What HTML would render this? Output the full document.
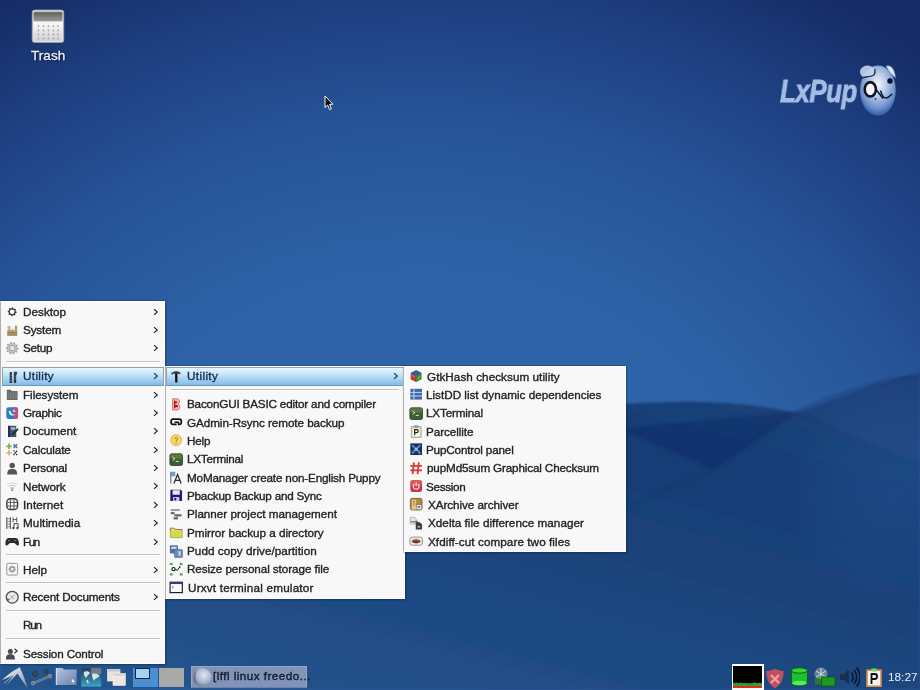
<!DOCTYPE html>
<html><head><meta charset="utf-8"><style>
html,body{margin:0;padding:0;width:920px;height:690px;overflow:hidden}
body{position:relative;font-family:"Liberation Sans",sans-serif;
background:linear-gradient(180deg,#162b63 0px,#1c3a7a 20px,#21458a 45px,#244b8e 100px,#28549a 200px,#2d5fa3 290px,#2c5ea2 335px,#27569a 370px,#22508e 430px,#1f4883 520px,#1e4680 600px,#21508b 660px,#21508c 690px)}
.t{position:absolute;white-space:nowrap;line-height:normal;-webkit-text-stroke:0.35px currentColor;will-change:transform}
.menu{position:absolute;background:#f8f8f8;box-sizing:border-box;border:1px solid #b0b0b0;border-top-color:#ffffff;border-right-color:#ffffff;border-bottom-color:#ffffff;box-shadow:0 -1px 0 rgba(10,30,80,.25),1px 1px 1.5px rgba(10,25,60,.45)}
.sep{position:absolute;height:1px;background:#c2c2c2;box-shadow:0 1px 0 #ffffff}
.hl{position:absolute;box-sizing:border-box;border:1px solid #8fa2ad;border-bottom-color:#6d9ab8;
background:linear-gradient(180deg,#e6f7fd 0%,#cfe9f8 30%,#a8d2f1 65%,#80bde9 100%)}
.ar{position:absolute}
.ic{position:absolute}
</style></head><body>
<svg style="position:absolute;left:0;top:0" width="920" height="690" viewBox="0 0 920 690">
<defs>
<radialGradient id="rg" gradientUnits="userSpaceOnUse" cx="423.2" cy="577.9" r="787.6" gradientTransform="translate(423.2 577.9) scale(1 0.86298) translate(-423.2 -577.9)">
<stop offset="0.0000" stop-color="#2f63a7"/><stop offset="0.4167" stop-color="#2f63a7"/><stop offset="0.5000" stop-color="#2c5fa3"/><stop offset="0.6667" stop-color="#275499"/><stop offset="0.8333" stop-color="#1f4183"/><stop offset="1.0000" stop-color="#152c66"/>
</radialGradient>
<linearGradient id="lg" gradientUnits="userSpaceOnUse" x1="735.0" y1="400.0" x2="629.4" y2="806.5"><stop offset="0.000" stop-color="#1a4078"/><stop offset="0.214" stop-color="#183d75"/><stop offset="1.000" stop-color="#24548d"/></linearGradient>
<linearGradient id="hg" gradientUnits="userSpaceOnUse" x1="700" y1="0" x2="920" y2="0">
<stop offset="0" stop-color="#0a1840" stop-opacity="0"/><stop offset="1" stop-color="#0a1840" stop-opacity="0.22"/>
</linearGradient>
<filter id="bl" x="-10%" y="-10%" width="120%" height="120%"><feGaussianBlur stdDeviation="0.8"/></filter>
<radialGradient id="lr" gradientUnits="userSpaceOnUse" cx="895" cy="495" r="110"><stop offset="0" stop-color="#3a72bc" stop-opacity="0.2"/><stop offset="0.6" stop-color="#3a72bc" stop-opacity="0.12"/><stop offset="1" stop-color="#3a72bc" stop-opacity="0"/></radialGradient>
</defs>
<rect width="920" height="690" fill="url(#rg)"/>
<path d="M0 520 C150 470 330 430 520 412 C600 405 660 401 701 402 C740 403 770 407 796 413 C840 397 880 380 920 374 L920 690 L0 690 Z" fill="url(#lg)" filter="url(#bl)"/>
<g filter="url(#bl)">
<path d="M620 429 C680 423 740 418 797 412 C770 430 740 452 714 469.6 C685 456 650 442 620 429 Z" fill="#0a1a48" opacity="0.16"/>
<path d="M797 412 C840 392 880 380 920 376 L920 466 C880 448 840 430 797 412 Z" fill="#3a78c0" opacity="0.07"/>
</g>
<g fill="none" filter="url(#bl)" stroke-linecap="round">
<path d="M560 542 C600 518 640 498 714 469.6 C740 452 770 430 797 412 C840 392 880 380 920 376" stroke="#15336a" stroke-width="3" opacity="0.35"/>
<path d="M620 429 C680 423 740 418 797 412" stroke="#163a70" stroke-width="1.5" opacity="0.35"/>
<path d="M600 420 C640 438 680 455 714 469.6" stroke="#15336a" stroke-width="2" opacity="0.35"/>
<path d="M797 412 C840 430 870 448 920 466" stroke="#17386e" stroke-width="2" opacity="0.35"/>
</g>

<rect x="780" y="380" width="140" height="230" fill="url(#lr)"/>
</svg>
<!-- trash -->
<svg style="position:absolute;left:31px;top:9px" width="34" height="35" viewBox="0 0 34 35">
<defs>
<linearGradient id="tlid" x1="0" y1="0" x2="0" y2="1"><stop offset="0" stop-color="#c8c8c8"/><stop offset="0.15" stop-color="#646464"/><stop offset="1" stop-color="#9a9a9a"/></linearGradient>
<linearGradient id="tbody" x1="0" y1="0" x2="0" y2="1"><stop offset="0" stop-color="#fafafa"/><stop offset="1" stop-color="#d2d2d2"/></linearGradient>
</defs>
<rect x="1.2" y="1" width="31.6" height="32.5" rx="2.5" fill="#e9e9e9" stroke="#9a9a9a" stroke-width="0.8"/>
<rect x="2.5" y="2.2" width="29" height="10" rx="1.5" fill="url(#tlid)"/>
<rect x="2.5" y="13.2" width="29" height="19" rx="1" fill="url(#tbody)"/>
<g fill="#a8a8a8">
<circle cx="7.5" cy="17" r="0.9"/><circle cx="12.5" cy="17" r="0.9"/><circle cx="17.5" cy="17" r="0.9"/><circle cx="22.5" cy="17" r="0.9"/><circle cx="27" cy="17" r="0.9"/>
<circle cx="7.5" cy="21.5" r="0.9"/><circle cx="12.5" cy="21.5" r="0.9"/><circle cx="17.5" cy="21.5" r="0.9"/><circle cx="22.5" cy="21.5" r="0.9"/><circle cx="27" cy="21.5" r="0.9"/>
<circle cx="7.5" cy="25.5" r="0.9"/><circle cx="12.5" cy="25.5" r="1"/><circle cx="17.5" cy="25.5" r="1"/><circle cx="22.5" cy="25.5" r="1"/><circle cx="27" cy="25.5" r="0.9"/>
<circle cx="7.5" cy="29.5" r="0.9"/><circle cx="12.5" cy="29.5" r="1"/><circle cx="17.5" cy="29.5" r="1"/><circle cx="22.5" cy="29.5" r="1"/><circle cx="27" cy="29.5" r="0.9"/>
</g>
</svg>
<div class="t" style="left:31px;top:48px;font-size:13.6px;color:#eef2fa;text-shadow:0 0 2px rgba(0,0,30,.8),1px 1px 1px rgba(0,0,30,.7);-webkit-text-stroke:0.3px #eef2fa">Trash</div>
<!-- logo -->
<div class="t" id="lxpup" style="left:780px;top:73px;font-size:31.5px;font-weight:bold;font-style:italic;color:#a3bce6;transform-origin:0 0;transform:scaleX(0.82);-webkit-text-stroke:0.9px #a3bce6;letter-spacing:-0.5px">LxPup</div>
<svg style="position:absolute;left:857px;top:63px" width="42" height="56" viewBox="0 0 42 56">
<defs>
<radialGradient id="dog" cx="0.5" cy="0.38" r="0.62"><stop offset="0" stop-color="#f2f6fc"/><stop offset="0.35" stop-color="#bccdea"/><stop offset="0.75" stop-color="#6f91cc"/><stop offset="1" stop-color="#2f56a0"/></radialGradient>
</defs>
<ellipse cx="20.9" cy="27.6" rx="18.3" ry="25.6" fill="url(#dog)" stroke="#1a3574" stroke-width="0.9"/>
<ellipse cx="10.5" cy="9" rx="7.5" ry="6.5" fill="#c4d4ee" opacity="0.9"/>
<path d="M29 3 C34 1.5 38 6 38.5 15 C35 12 31 8 29 3Z" fill="#dbe6f6" stroke="#5a78b0" stroke-width="0.6"/>
<path d="M4 15 C8 13.5 13 14.5 17 12 C18 10.5 18.2 8 18 6" fill="none" stroke="#1c2a50" stroke-width="1.3"/>
<ellipse cx="13.3" cy="26.3" rx="5.6" ry="7.2" fill="#f4f6fb" stroke="#0e1220" stroke-width="2.6"/>
<circle cx="33" cy="18" r="2.7" fill="#0e1220"/>
<path d="M19 26.5 L26 35.5" stroke="#12182c" stroke-width="1.5"/>
<path d="M23.5 27.5 C25.5 35 28.5 38 35 31" fill="none" stroke="#12182c" stroke-width="1.5"/>
<circle cx="18.5" cy="36" r="0.9" fill="#2a3a60"/>
</svg>
<!-- cursor -->
<svg style="position:absolute;left:324px;top:95px" width="10" height="16" viewBox="0 0 10 16">
<path d="M1 1 L1 12.5 L3.6 10 L5.6 14.6 L7.4 13.8 L5.5 9.4 L8.8 9.2 Z" fill="#000" stroke="#fff" stroke-width="1" stroke-linejoin="round"/>
</svg>
<div class="menu" style="left:0px;top:301px;width:165px;height:363px"></div>
<div class="hl" style="left:1.5px;width:162.0px;top:367.2px;height:18.400000000000034px"></div>
<div class="sep" style="left:6px;width:153.5px;top:360.80px"></div>
<div class="sep" style="left:6px;width:153.5px;top:554.30px"></div>
<div class="sep" style="left:6px;width:153.5px;top:582.20px"></div>
<div class="sep" style="left:6px;width:153.5px;top:609.80px"></div>
<div class="sep" style="left:6px;width:153.5px;top:637.90px"></div>
<div class="t" style="left:23.10px;top:305.01px;font-size:11.7px;letter-spacing:0.037px;color:#222222;">Desktop</div>
<svg class="ar" style="left:153.20px;top:307.90px" width="6" height="8" viewBox="0 0 6 8"><path d="M1 1.1 L4.3 4 L1 6.9" fill="none" stroke="#222222" stroke-width="1.15"/></svg>
<svg class="ic" style="left:5.40px;top:304.50px" width="14.4" height="14.4" viewBox="0 0 16 16"><polygon points="13.00,7.60 12.90,8.58 11.60,9.09 11.24,9.77 11.54,11.14 10.78,11.76 9.49,11.20 8.76,11.43 8.00,12.60 7.02,12.50 6.51,11.20 5.83,10.84 4.46,11.14 3.84,10.38 4.40,9.09 4.17,8.36 3.00,7.60 3.10,6.62 4.40,6.11 4.76,5.43 4.46,4.06 5.22,3.44 6.51,4.00 7.24,3.77 8.00,2.60 8.98,2.70 9.49,4.00 10.17,4.36 11.54,4.06 12.16,4.82 11.60,6.11 11.83,6.84" fill="#333333"/><circle cx="8" cy="7.6" r="2.7" fill="#f8f8f8"/></svg>
<div class="t" style="left:22.96px;top:323.21px;font-size:11.7px;letter-spacing:-0.138px;color:#222222;">System</div>
<svg class="ar" style="left:153.20px;top:326.10px" width="6" height="8" viewBox="0 0 6 8"><path d="M1 1.1 L4.3 4 L1 6.9" fill="none" stroke="#222222" stroke-width="1.15"/></svg>
<svg class="ic" style="left:5.40px;top:322.70px" width="14.4" height="14.4" viewBox="0 0 16 16"><path d="M2.5 14.5 L2.5 8 L6 6 L6 8.5 L9.5 6 L9.5 8.5 L11 8 L11 3 L13.5 3 L13.5 14.5Z" fill="#b39b6e"/><path d="M2.5 10.5 H13.5 M2.5 12.5 H13.5" stroke="#8a7550" stroke-width="0.7"/><circle cx="4.5" cy="5" r="2" fill="#a8a8a8" opacity="0.8"/></svg>
<div class="t" style="left:22.96px;top:341.31px;font-size:11.7px;letter-spacing:-0.240px;color:#222222;">Setup</div>
<svg class="ar" style="left:153.20px;top:344.20px" width="6" height="8" viewBox="0 0 6 8"><path d="M1 1.1 L4.3 4 L1 6.9" fill="none" stroke="#222222" stroke-width="1.15"/></svg>
<svg class="ic" style="left:5.40px;top:340.80px" width="14.4" height="14.4" viewBox="0 0 16 16"><polygon points="15.20,8.00 15.11,9.13 13.33,9.73 12.99,10.54 13.82,12.23 13.09,13.09 11.29,12.53 10.54,12.99 10.22,14.85 9.13,15.11 8.00,13.60 7.12,13.53 5.78,14.85 4.73,14.42 4.71,12.53 4.04,11.96 2.18,12.23 1.58,11.27 2.67,9.73 2.47,8.88 0.80,8.00 0.89,6.87 2.67,6.27 3.01,5.46 2.18,3.77 2.91,2.91 4.71,3.47 5.46,3.01 5.78,1.15 6.87,0.89 8.00,2.40 8.88,2.47 10.22,1.15 11.27,1.58 11.29,3.47 11.96,4.04 13.82,3.77 14.42,4.73 13.33,6.27 13.53,7.12" fill="#a9a9a9"/><circle cx="8" cy="8" r="2.4" fill="#e8e8e8"/><circle cx="8" cy="8" r="4.3" fill="none" stroke="#c8c8c8" stroke-width="1.2"/></svg>
<div class="t" style="left:23.02px;top:369.41px;font-size:11.7px;letter-spacing:0.353px;color:#122c55;">Utility</div>
<svg class="ar" style="left:153.20px;top:372.30px" width="6" height="8" viewBox="0 0 6 8"><path d="M1 1.1 L4.3 4 L1 6.9" fill="none" stroke="#122c55" stroke-width="1.15"/></svg>
<svg class="ic" style="left:5.40px;top:368.90px" width="14.4" height="14.4" viewBox="0 0 16 16"><rect x="5.2" y="3.5" width="2.6" height="12" fill="#2c3440"/><rect x="9.8" y="4.5" width="2.6" height="11" fill="#2c3440"/><path d="M9.8 3 L13.5 3 L13.5 6.5 L12.4 6.5 L12.4 4.5 L9.8 4.5Z" fill="#3a4250"/><path d="M5.2 7 H7.8 M5.2 10 H7.8 M5.2 13 H7.8 M9.8 8 H12.4 M9.8 11 H12.4" stroke="#8aa0b8" stroke-width="0.6"/></svg>
<div class="t" style="left:23.10px;top:387.76px;font-size:11.7px;letter-spacing:-0.053px;color:#222222;">Filesystem</div>
<svg class="ar" style="left:153.20px;top:390.65px" width="6" height="8" viewBox="0 0 6 8"><path d="M1 1.1 L4.3 4 L1 6.9" fill="none" stroke="#222222" stroke-width="1.15"/></svg>
<svg class="ic" style="left:5.40px;top:387.25px" width="14.4" height="14.4" viewBox="0 0 16 16"><path d="M2 3 L6.5 3 L7.5 4.5 L14 4.5 L14 14.5 L2 14.5Z" fill="#6b6b6b"/><rect x="3" y="6" width="10" height="7.5" fill="#7d7d7d"/><path d="M5 6 V13.5 M8 6 V13.5 M11 6 V13.5" stroke="#5a5a5a" stroke-width="0.5"/></svg>
<div class="t" style="left:23.19px;top:406.11px;font-size:11.7px;letter-spacing:-0.346px;color:#222222;">Graphic</div>
<svg class="ar" style="left:153.20px;top:409.00px" width="6" height="8" viewBox="0 0 6 8"><path d="M1 1.1 L4.3 4 L1 6.9" fill="none" stroke="#222222" stroke-width="1.15"/></svg>
<svg class="ic" style="left:5.40px;top:405.60px" width="14.4" height="14.4" viewBox="0 0 16 16"><rect x="1.5" y="1.5" width="13" height="13" rx="2.5" fill="#2a7fb8"/><path d="M9.5 1.5 H12 A2.5 2.5 0 0 1 14.5 4 V12 A2.5 2.5 0 0 1 12 14.5 H10Z" fill="#c04a8a"/><path d="M4 6 C5 11 9 12 11.5 9 C9 10 6.5 9 6 5Z" fill="#e8f4ff"/><path d="M9 3 L12 6 L9 7Z" fill="#f0d0e8"/></svg>
<div class="t" style="left:23.10px;top:424.46px;font-size:11.7px;letter-spacing:-0.003px;color:#222222;">Document</div>
<svg class="ar" style="left:153.20px;top:427.35px" width="6" height="8" viewBox="0 0 6 8"><path d="M1 1.1 L4.3 4 L1 6.9" fill="none" stroke="#222222" stroke-width="1.15"/></svg>
<svg class="ic" style="left:5.40px;top:423.95px" width="14.4" height="14.4" viewBox="0 0 16 16"><rect x="3.5" y="2" width="9" height="12.5" fill="#3d5070"/><rect x="3.5" y="2" width="2" height="12.5" fill="#1e2a40"/><rect x="6.5" y="3.5" width="5" height="3" fill="#9fb0c8"/><path d="M8 12 L14.5 5.5" stroke="#2a2a2a" stroke-width="2"/></svg>
<div class="t" style="left:23.19px;top:442.81px;font-size:11.7px;letter-spacing:-0.120px;color:#222222;">Calculate</div>
<svg class="ar" style="left:153.20px;top:445.70px" width="6" height="8" viewBox="0 0 6 8"><path d="M1 1.1 L4.3 4 L1 6.9" fill="none" stroke="#222222" stroke-width="1.15"/></svg>
<svg class="ic" style="left:5.40px;top:442.30px" width="14.4" height="14.4" viewBox="0 0 16 16"><path d="M4.5 1.8 V7.8 M1.5 4.8 H7.5" stroke="#7fb050" stroke-width="2"/><path d="M9.5 2.5 L13.5 6.5 M13.5 2.5 L9.5 6.5" stroke="#4a78b0" stroke-width="1.8"/><path d="M4.5 9 V15 M1.5 12 H7.5" stroke="#d8b070" stroke-width="1.8"/><path d="M9.5 14.5 L13.5 9.5" stroke="#3a3a3a" stroke-width="1.3"/><circle cx="10" cy="10" r="0.9" fill="#3a3a3a"/><circle cx="13" cy="14" r="0.9" fill="#3a3a3a"/></svg>
<div class="t" style="left:23.10px;top:461.21px;font-size:11.7px;letter-spacing:-0.282px;color:#222222;">Personal</div>
<svg class="ar" style="left:153.20px;top:464.10px" width="6" height="8" viewBox="0 0 6 8"><path d="M1 1.1 L4.3 4 L1 6.9" fill="none" stroke="#222222" stroke-width="1.15"/></svg>
<svg class="ic" style="left:5.40px;top:460.70px" width="14.4" height="14.4" viewBox="0 0 16 16"><circle cx="8" cy="5" r="3" fill="#555"/><path d="M2.5 15 C2.5 10 4.5 8.8 8 8.8 C11.5 8.8 13.5 10 13.5 15Z" fill="#555"/></svg>
<div class="t" style="left:23.10px;top:479.56px;font-size:11.7px;letter-spacing:-0.050px;color:#222222;">Network</div>
<svg class="ar" style="left:153.20px;top:482.45px" width="6" height="8" viewBox="0 0 6 8"><path d="M1 1.1 L4.3 4 L1 6.9" fill="none" stroke="#222222" stroke-width="1.15"/></svg>
<svg class="ic" style="left:5.40px;top:479.05px" width="14.4" height="14.4" viewBox="0 0 16 16"><path d="M2.5 6.5 C5.5 3.5 10.5 3.5 13.5 6.5" fill="none" stroke="#d8dde6" stroke-width="1.3"/><path d="M4.5 8.5 C6.5 6.5 9.5 6.5 11.5 8.5" fill="none" stroke="#b8c4d4" stroke-width="1.3"/><path d="M6.5 10.5 C7.3 9.8 8.7 9.8 9.5 10.5" fill="none" stroke="#8a9ab0" stroke-width="1.3"/><circle cx="8" cy="12.3" r="1" fill="#5a6a80"/></svg>
<div class="t" style="left:23.16px;top:497.91px;font-size:11.7px;letter-spacing:0.073px;color:#222222;">Internet</div>
<svg class="ar" style="left:153.20px;top:500.80px" width="6" height="8" viewBox="0 0 6 8"><path d="M1 1.1 L4.3 4 L1 6.9" fill="none" stroke="#222222" stroke-width="1.15"/></svg>
<svg class="ic" style="left:5.40px;top:497.40px" width="14.4" height="14.4" viewBox="0 0 16 16"><rect x="2" y="2" width="12" height="12" rx="4" fill="none" stroke="#3e3e3e" stroke-width="1.6"/><path d="M6 2.5 V13.5 M10 2.5 V13.5 M2.5 6 H13.5 M2.5 10 H13.5" stroke="#4a4a4a" stroke-width="1"/></svg>
<div class="t" style="left:23.09px;top:516.26px;font-size:11.7px;letter-spacing:0.078px;color:#222222;">Multimedia</div>
<svg class="ar" style="left:153.20px;top:519.15px" width="6" height="8" viewBox="0 0 6 8"><path d="M1 1.1 L4.3 4 L1 6.9" fill="none" stroke="#222222" stroke-width="1.15"/></svg>
<svg class="ic" style="left:5.40px;top:515.75px" width="14.4" height="14.4" viewBox="0 0 16 16"><path d="M2 1.5 V14.5 M6 1.5 V14.5" stroke="#555" stroke-width="1.2"/><path d="M2 3 H6 M2 6 H6 M2 9 H6 M2 12 H6" stroke="#666" stroke-width="0.8"/><path d="M9 1.5 V7 M13 1.5 V7 M9 4 H13" stroke="#555" stroke-width="1.1"/><path d="M10 13 V8.5 H14.5 V13" fill="none" stroke="#444" stroke-width="1.1"/><circle cx="9.3" cy="13.3" r="1.3" fill="#444"/><circle cx="13.8" cy="13.3" r="1.3" fill="#444"/></svg>
<div class="t" style="left:23.10px;top:534.61px;font-size:11.7px;letter-spacing:-1.501px;color:#222222;">Fun</div>
<svg class="ar" style="left:153.20px;top:537.50px" width="6" height="8" viewBox="0 0 6 8"><path d="M1 1.1 L4.3 4 L1 6.9" fill="none" stroke="#222222" stroke-width="1.15"/></svg>
<svg class="ic" style="left:5.40px;top:534.10px" width="14.4" height="14.4" viewBox="0 0 16 16"><path d="M4 4.5 H12 C14.5 4.5 15.5 8 15.5 11 C15.5 13 13.5 13.5 12 11.5 L10.5 10 H5.5 L4 11.5 C2.5 13.5 0.5 13 0.5 11 C0.5 8 1.5 4.5 4 4.5Z" fill="#2a2a2a"/><circle cx="4.5" cy="7.3" r="1" fill="#777"/><circle cx="11.5" cy="7.3" r="1" fill="#777"/></svg>
<div class="t" style="left:23.10px;top:562.71px;font-size:11.7px;letter-spacing:-0.003px;color:#222222;">Help</div>
<svg class="ar" style="left:153.20px;top:565.60px" width="6" height="8" viewBox="0 0 6 8"><path d="M1 1.1 L4.3 4 L1 6.9" fill="none" stroke="#222222" stroke-width="1.15"/></svg>
<svg class="ic" style="left:5.40px;top:562.20px" width="14.4" height="14.4" viewBox="0 0 16 16"><rect x="2" y="1.5" width="12" height="13" rx="1.5" fill="none" stroke="#8a8a8a" stroke-width="1"/><polygon points="12.20,8.00 12.12,8.82 10.96,9.22 10.66,9.78 10.97,10.97 10.33,11.49 9.22,10.96 8.62,11.14 8.00,12.20 7.18,12.12 6.78,10.96 6.22,10.66 5.03,10.97 4.51,10.33 5.04,9.22 4.86,8.62 3.80,8.00 3.88,7.18 5.04,6.78 5.34,6.22 5.03,5.03 5.67,4.51 6.78,5.04 7.38,4.86 8.00,3.80 8.82,3.88 9.22,5.04 9.78,5.34 10.97,5.03 11.49,5.67 10.96,6.78 11.14,7.38" fill="#9a9a9a"/><circle cx="8" cy="8" r="1.5" fill="#f4f4f4"/></svg>
<div class="t" style="left:23.10px;top:590.21px;font-size:11.7px;letter-spacing:-0.164px;color:#222222;">Recent Documents</div>
<svg class="ar" style="left:153.20px;top:593.10px" width="6" height="8" viewBox="0 0 6 8"><path d="M1 1.1 L4.3 4 L1 6.9" fill="none" stroke="#222222" stroke-width="1.15"/></svg>
<svg class="ic" style="left:5.40px;top:589.70px" width="14.4" height="14.4" viewBox="0 0 16 16"><circle cx="8" cy="8" r="6.6" fill="#eaeaea" stroke="#4e4e4e" stroke-width="1.4"/><path d="M5 11 L11 5 M6 6 L10 10" stroke="#8a8a8a" stroke-width="0.8"/><path d="M1.5 9 L3.5 13 L5 10Z" fill="#666"/></svg>
<div class="t" style="left:23.10px;top:618.41px;font-size:11.7px;letter-spacing:-1.270px;color:#222222;">Run</div>
<div class="t" style="left:22.96px;top:646.71px;font-size:11.7px;letter-spacing:-0.147px;color:#222222;">Session Control</div>
<svg class="ic" style="left:5.40px;top:646.20px" width="14.4" height="14.4" viewBox="0 0 16 16"><circle cx="6" cy="6" r="2.8" fill="#4a4a4a"/><path d="M1 15 C1 10.5 2.8 9.3 6 9.3 C9.2 9.3 11 10.5 11 15Z" fill="#4a4a4a"/><path d="M10.5 3 L13.5 5.5 L10.5 8" fill="none" stroke="#3a3a3a" stroke-width="1.4"/></svg>
<div class="menu" style="left:165px;top:366px;width:240px;height:233px"></div>
<div class="hl" style="left:166px;width:237.5px;top:367.2px;height:18.400000000000034px"></div>
<div class="t" style="left:187.02px;top:369.41px;font-size:11.7px;letter-spacing:0.379px;color:#122c55;">Utility</div>
<svg class="ar" style="left:393.00px;top:372.30px" width="6" height="8" viewBox="0 0 6 8"><path d="M1 1.1 L4.3 4 L1 6.9" fill="none" stroke="#122c55" stroke-width="1.15"/></svg>
<svg class="ic" style="left:169.30px;top:368.90px" width="14.4" height="14.4" viewBox="0 0 16 16"><path d="M3 4.5 C5 2 11 2 13 4.5 L12 6 C10 4.5 6 4.5 4 6Z" fill="#3a4048"/><circle cx="3.5" cy="5" r="1.3" fill="#6a7280"/><rect x="6.8" y="4.5" width="2.6" height="10.5" fill="#101010"/></svg>
<div class="sep" style="left:171px;width:227.5px;top:388.80px"></div>
<div class="t" style="left:187.10px;top:397.21px;font-size:11.7px;letter-spacing:-0.177px;color:#222222;">BaconGUI BASIC editor and compiler</div>
<svg class="ic" style="left:169.30px;top:396.70px" width="14.4" height="14.4" viewBox="0 0 16 16"><path d="M4 2 H9 C12.5 2 12.5 7 10 7.8 C13 8.5 13 14.5 9 14.5 H4Z" fill="#f0b8b8" stroke="#d46a6a" stroke-width="1"/><path d="M6.5 5 H8.5 C9.5 5 9.5 7 8.5 7 H6.5Z M6.5 9 H9 C10.3 9 10.3 11.5 9 11.5 H6.5Z" fill="#b01818"/><rect x="5.5" y="4" width="1.5" height="8.5" fill="#b01818"/></svg>
<div class="t" style="left:187.19px;top:415.57px;font-size:11.7px;letter-spacing:-0.066px;color:#222222;">GAdmin-Rsync remote backup</div>
<svg class="ic" style="left:169.30px;top:415.06px" width="14.4" height="14.4" viewBox="0 0 16 16"><path d="M8.5 10.5 H4.5 C1.5 10.5 1.5 4.5 4.5 4.5 H11.5 C14.5 4.5 14.5 10.5 11.5 10.5 H10" fill="none" stroke="#111" stroke-width="1.9"/><path d="M6 8 H10.5 V10.5" fill="none" stroke="#111" stroke-width="1.6"/></svg>
<div class="t" style="left:187.10px;top:433.92px;font-size:11.7px;letter-spacing:-0.189px;color:#222222;">Help</div>
<svg class="ic" style="left:169.30px;top:433.41px" width="14.4" height="14.4" viewBox="0 0 16 16"><circle cx="8" cy="8" r="6.2" fill="#f2d46a"/><circle cx="8" cy="8" r="6.2" fill="none" stroke="#d8b040" stroke-width="0.8"/><path d="M6.5 6.5 C6.5 4.5 9.5 4.5 9.5 6.5 C9.5 7.8 8 8 8 9.5" fill="none" stroke="#a88020" stroke-width="1.1"/><circle cx="8" cy="11.3" r="0.7" fill="#a88020"/></svg>
<div class="t" style="left:187.10px;top:452.28px;font-size:11.7px;letter-spacing:-0.227px;color:#222222;">LXTerminal</div>
<svg class="ic" style="left:169.30px;top:451.77px" width="14.4" height="14.4" viewBox="0 0 16 16"><rect x="1" y="2" width="14" height="13" rx="2" fill="#3f5e2e" stroke="#1e2e16" stroke-width="0.8"/><rect x="1.5" y="2.5" width="13" height="5" rx="1.5" fill="#567a40"/><path d="M4 5.5 L6.5 7.5 L4 9.5" fill="none" stroke="#e8f0e0" stroke-width="1.1"/><path d="M7.5 10.5 H11" stroke="#e8f0e0" stroke-width="1"/></svg>
<div class="t" style="left:187.09px;top:470.64px;font-size:11.7px;letter-spacing:-0.177px;color:#222222;">MoManager create non-English Puppy</div>
<svg class="ic" style="left:169.30px;top:470.12px" width="14.4" height="14.4" viewBox="0 0 16 16"><path d="M2 15 V2" stroke="#3a4a58" stroke-width="1"/><path d="M2 2 H7 V7 H2Z" fill="#6aa0b8"/><path d="M5.5 15 L9.5 5 L13.5 15 M7 11.5 H12" fill="none" stroke="#2a2a2a" stroke-width="1.4"/></svg>
<div class="t" style="left:187.10px;top:488.99px;font-size:11.7px;letter-spacing:-0.219px;color:#222222;">Pbackup Backup and Sync</div>
<svg class="ic" style="left:169.30px;top:488.48px" width="14.4" height="14.4" viewBox="0 0 16 16"><path d="M1.5 2 H13 L14.5 3.5 V14.5 H1.5Z" fill="#1a1a78"/><rect x="4" y="2.5" width="8" height="5" fill="#e8e8f0"/><rect x="4.5" y="10" width="7" height="4.5" fill="#c8c8d8"/><rect x="6" y="11" width="2" height="2.8" fill="#1a1a78"/></svg>
<div class="t" style="left:187.10px;top:507.35px;font-size:11.7px;letter-spacing:-0.007px;color:#222222;">Planner project management</div>
<svg class="ic" style="left:169.30px;top:506.84px" width="14.4" height="14.4" viewBox="0 0 16 16"><rect x="2" y="2.5" width="10" height="1.8" fill="#8a8a8a"/><rect x="2" y="5.5" width="4" height="2.5" fill="#6a6a70"/><rect x="6" y="8" width="8" height="2.5" fill="#6a6a70"/><rect x="5" y="11.5" width="5" height="2.2" fill="#5a5a60"/><path d="M6 7 V8 M9 10.5 V11.5" stroke="#444" stroke-width="0.8"/></svg>
<div class="t" style="left:187.10px;top:525.70px;font-size:11.7px;letter-spacing:-0.018px;color:#222222;">Pmirror backup a directory</div>
<svg class="ic" style="left:169.30px;top:525.19px" width="14.4" height="14.4" viewBox="0 0 16 16"><path d="M1.5 3.5 H6 L7 5 H14.5 V14 H1.5Z" fill="#e2e070" stroke="#5a5820" stroke-width="0.8"/><rect x="1.5" y="6.5" width="13" height="7.5" fill="#d8d650"/></svg>
<div class="t" style="left:187.10px;top:544.06px;font-size:11.7px;letter-spacing:0.046px;color:#222222;">Pudd copy drive/partition</div>
<svg class="ic" style="left:169.30px;top:543.55px" width="14.4" height="14.4" viewBox="0 0 16 16"><rect x="1" y="1.5" width="9" height="9" rx="1" fill="#5a6e98"/><rect x="2.5" y="3" width="6" height="2.5" fill="#c8d8f0"/><rect x="6" y="6" width="9" height="9" rx="1" fill="#6a88b8" stroke="#4a5a80" stroke-width="0.6"/><rect x="10.5" y="8" width="2.5" height="5" fill="#c8d8f0"/></svg>
<div class="t" style="left:187.10px;top:562.42px;font-size:11.7px;letter-spacing:-0.075px;color:#222222;">Resize personal storage file</div>
<svg class="ic" style="left:169.30px;top:561.90px" width="14.4" height="14.4" viewBox="0 0 16 16"><g fill="#58a058"><rect x="1" y="1" width="3" height="2.5"/><rect x="12" y="1" width="3" height="2.5"/><rect x="1" y="12.5" width="3" height="2.5"/><rect x="12" y="12.5" width="3" height="2.5"/></g><circle cx="5" cy="8" r="1.8" fill="none" stroke="#111" stroke-width="1.2"/><path d="M7 8.5 L9.5 9 L12 5.5" stroke="#111" stroke-width="1.1" fill="none"/><circle cx="12" cy="5.5" r="0.9" fill="#111"/></svg>
<div class="t" style="left:187.57px;top:580.77px;font-size:11.7px;letter-spacing:0.210px;color:#222222;">Urxvt terminal emulator</div>
<svg class="ic" style="left:169.30px;top:580.26px" width="14.4" height="14.4" viewBox="0 0 16 16"><rect x="1.2" y="2.5" width="13.6" height="11.5" fill="#fafafa" stroke="#1a1a30" stroke-width="1.3"/><rect x="1.5" y="3" width="13" height="1.5" fill="#3a3a70"/><path d="M3.5 7 L4.8 8 L3.5 9" fill="none" stroke="#222" stroke-width="0.7"/></svg>
<div class="menu" style="left:403px;top:366px;width:223px;height:186px"></div>
<div class="t" style="left:427.35px;top:369.51px;font-size:11.7px;letter-spacing:0.058px;color:#222222;">GtkHash checksum utility</div>
<svg class="ic" style="left:409.30px;top:369.00px" width="14.4" height="14.4" viewBox="0 0 16 16"><path d="M8 1.5 L14 4.5 L14 11.5 L8 14.5 L2 11.5 L2 4.5Z" fill="#3a8a3a"/><path d="M2 4.5 L8 7.5 L8 14.5 L2 11.5Z" fill="#b83a3a"/><path d="M2 4.5 L8 1.5 L14 4.5 L8 7.5Z" fill="#3a5a9a"/><path d="M9.5 11 L12.5 8" stroke="#a0e0a0" stroke-width="1"/><path d="M3 7 L6.5 9" stroke="#e0a0a0" stroke-width="0.8"/></svg>
<div class="t" style="left:426.36px;top:387.87px;font-size:11.7px;letter-spacing:0.001px;color:#222222;">ListDD list dynamic dependencies</div>
<svg class="ic" style="left:409.30px;top:387.36px" width="14.4" height="14.4" viewBox="0 0 16 16"><rect x="1.5" y="2" width="13" height="12" fill="#3a6aaa"/><path d="M1.5 6 H14.5 M1.5 10 H14.5" stroke="#e8f0fa" stroke-width="0.9"/><path d="M5.5 2 V14" stroke="#e8f0fa" stroke-width="0.9"/></svg>
<div class="t" style="left:426.36px;top:406.22px;font-size:11.7px;letter-spacing:-0.165px;color:#222222;">LXTerminal</div>
<svg class="ic" style="left:409.30px;top:405.71px" width="14.4" height="14.4" viewBox="0 0 16 16"><rect x="1" y="2" width="14" height="13" rx="2" fill="#3f5e2e" stroke="#1e2e16" stroke-width="0.8"/><rect x="1.5" y="2.5" width="13" height="5" rx="1.5" fill="#567a40"/><path d="M4 5.5 L6.5 7.5 L4 9.5" fill="none" stroke="#e8f0e0" stroke-width="1.1"/><path d="M7.5 10.5 H11" stroke="#e8f0e0" stroke-width="1"/></svg>
<div class="t" style="left:426.36px;top:424.58px;font-size:11.7px;letter-spacing:-0.076px;color:#222222;">Parcellite</div>
<svg class="ic" style="left:409.30px;top:424.07px" width="14.4" height="14.4" viewBox="0 0 16 16"><rect x="2.5" y="3" width="11" height="12" fill="#d8d0c0" stroke="#a89878" stroke-width="0.8"/><rect x="5.5" y="1.5" width="5" height="2.5" fill="#78a870"/><rect x="4" y="5" width="8" height="8.5" fill="#f8f8f4"/><path d="M6.3 12.5 V6.3 H8.8 C10.8 6.3 10.8 9.5 8.8 9.5 H6.3" fill="none" stroke="#222" stroke-width="1.3"/></svg>
<div class="t" style="left:426.36px;top:442.94px;font-size:11.7px;letter-spacing:-0.172px;color:#222222;">PupControl panel</div>
<svg class="ic" style="left:409.30px;top:442.42px" width="14.4" height="14.4" viewBox="0 0 16 16"><rect x="1.5" y="1.5" width="13" height="13" fill="#1a3060"/><path d="M3.5 3.5 L12.5 12.5 M12.5 3.5 L3.5 12.5" stroke="#5a8ad0" stroke-width="2"/><circle cx="8" cy="8" r="1.6" fill="#9ac0f0"/><path d="M10 12 L13 14" stroke="#c85050" stroke-width="1"/></svg>
<div class="t" style="left:426.69px;top:461.29px;font-size:11.7px;letter-spacing:-0.149px;color:#222222;">pupMd5sum Graphical Checksum</div>
<svg class="ic" style="left:409.30px;top:460.78px" width="14.4" height="14.4" viewBox="0 0 16 16"><path d="M5.5 1.5 L4 14.5 M11 1.5 L9.5 14.5 M1.5 5.5 H14.5 M1.5 10.5 H14.5" stroke="#d8383a" stroke-width="2"/></svg>
<div class="t" style="left:426.22px;top:479.65px;font-size:11.7px;letter-spacing:-0.310px;color:#222222;">Session</div>
<svg class="ic" style="left:409.30px;top:479.14px" width="14.4" height="14.4" viewBox="0 0 16 16"><rect x="1.5" y="1.5" width="13" height="13" rx="2.5" fill="#c83a40"/><rect x="1.5" y="1.5" width="13" height="6" rx="2.5" fill="#d85a60"/><path d="M5.8 5.8 A3.2 3.2 0 1 0 10.2 5.8" fill="none" stroke="#fbe8e8" stroke-width="1.3"/><path d="M8 4 V8" stroke="#fbe8e8" stroke-width="1.3"/></svg>
<div class="t" style="left:427.56px;top:498.00px;font-size:11.7px;letter-spacing:-0.065px;color:#222222;">XArchive archiver</div>
<svg class="ic" style="left:409.30px;top:497.49px" width="14.4" height="14.4" viewBox="0 0 16 16"><rect x="1.5" y="1.5" width="13" height="13" rx="2" fill="#b08a40" stroke="#6a5020" stroke-width="0.8"/><rect x="3" y="3" width="5" height="11" fill="#e0c888"/><rect x="8" y="8.5" width="6" height="5.5" fill="#f0f0ea" stroke="#555" stroke-width="0.5"/><rect x="9.5" y="10" width="3" height="2" fill="#777"/><path d="M4 5 H7 M4 7 H7 M4 9 H7" stroke="#8a6a30" stroke-width="0.7"/></svg>
<div class="t" style="left:427.56px;top:516.36px;font-size:11.7px;letter-spacing:0.028px;color:#222222;">Xdelta file difference manager</div>
<svg class="ic" style="left:409.30px;top:515.85px" width="14.4" height="14.4" viewBox="0 0 16 16"><path d="M1.5 1.5 H6 L8 3.5 V9 H1.5Z" fill="#e8e8e8" stroke="#8a8a8a" stroke-width="0.6"/><path d="M7.5 7 H12 L14.5 9.5 V15 H7.5Z" fill="#3a3a3a"/><path d="M2 6.5 H9.5 L8 5 M9.5 6.5 L8 8" fill="none" stroke="#333" stroke-width="0.9"/><rect x="9.5" y="11" width="3" height="2" fill="#aaa"/></svg>
<div class="t" style="left:427.56px;top:534.72px;font-size:11.7px;letter-spacing:0.075px;color:#222222;">Xfdiff-cut compare two files</div>
<svg class="ic" style="left:409.30px;top:534.20px" width="14.4" height="14.4" viewBox="0 0 16 16"><rect x="1" y="3.5" width="14" height="9" rx="2.5" fill="#f0e8e6" stroke="#8a8a8a" stroke-width="1"/><path d="M3 8 C5 5 11 5 13 8 C11 11 5 11 3 8Z" fill="#6a2a20"/><path d="M4.5 8 C6 7 10 7 11.5 8" stroke="#d87870" stroke-width="0.8" fill="none"/></svg>
<!-- taskbar -->
<svg style="position:absolute;left:0;top:664px" width="130" height="26" viewBox="0 0 130 26">
<defs>
<linearGradient id="lx" x1="0" y1="0" x2="1" y2="1"><stop offset="0" stop-color="#f4f6fa"/><stop offset="0.6" stop-color="#b8c0cc"/><stop offset="1" stop-color="#7d8796"/></linearGradient>
<linearGradient id="fold" x1="0" y1="0" x2="1" y2="1"><stop offset="0" stop-color="#b9c6de"/><stop offset="1" stop-color="#6680b0"/></linearGradient>
<linearGradient id="glob" x1="0" y1="0" x2="0" y2="1"><stop offset="0" stop-color="#2a3a55"/><stop offset="0.5" stop-color="#2f6f8a"/><stop offset="1" stop-color="#3aa7c8"/></linearGradient>
</defs>
<!-- lxde logo -->
<path d="M19.8 3.2 C14 6 7 11 1.8 16.2 C6 14.5 10 12.5 14 11 C11 15 8 18.5 6 21.5 C10 17 14 13 17.5 9.5 C21 15 24.5 20 27.6 23.8 C25.5 17 23 10 19.8 3.2Z" fill="url(#lx)"/>
<path d="M4 19.5 C8 15.5 11.5 12.5 15 10.5" stroke="#c8ced8" stroke-width="0.8" fill="none"/>
<!-- wrench/connect icon -->
<g fill="#3d4452" stroke="#262a33" stroke-width="0.5">
<circle cx="35" cy="9.8" r="2.6"/><circle cx="46.2" cy="7.6" r="2.2"/>
</g>
<path d="M32.5 19.5 L50.5 12" stroke="#9aa0aa" stroke-width="2.4" stroke-linecap="round"/>
<path d="M32.5 19.5 L50.5 12" stroke="#50586a" stroke-width="1" stroke-linecap="round"/>
<circle cx="33" cy="19.3" r="1.8" fill="none" stroke="#8a909a" stroke-width="1"/>
<circle cx="50" cy="12.2" r="1.8" fill="none" stroke="#8a909a" stroke-width="1"/>
<!-- folder -->
<path d="M56 4 L62.5 4 L64 5.5 L76.6 5.5 L76.6 21 L56 21 Z" fill="url(#fold)"/>
<path d="M56.3 4 L56.3 21" stroke="#e8eef8" stroke-width="0.9"/>
<path d="M71.5 14 L71.5 19.5 L72.8 18.3 L74 20.5 L74.9 20 L73.8 17.9 L75.5 17.7Z" fill="#f0f0f0" stroke="#555" stroke-width="0.3"/>
<!-- globe -->
<rect x="81.2" y="4" width="20" height="18.6" fill="url(#glob)"/>
<rect x="91" y="4" width="10.2" height="6" fill="#8a909c" opacity="0.7"/>
<path d="M84 8 C86 6.5 89 7 90 9 C89 11 87 11.5 86 14 C84.5 12 83 10 84 8Z M92 10 C95 9 99 10 99.5 12 C98 14 95 14 94 17 C93 15 91.5 12 92 10Z M86.5 16 C88 15.5 89 17 88.5 19.5 C87 19 86 17.5 86.5 16Z" fill="#e6eef4" opacity="0.9"/>
<!-- windows icon -->
<rect x="107.5" y="5.6" width="12.5" height="11.4" fill="#ebe4d6" stroke="#f8f8f8" stroke-width="0.6"/>
<rect x="107.5" y="5.6" width="12.5" height="2" fill="#c9c9cf"/>
<rect x="113" y="9.5" width="12.3" height="11.8" fill="#efe9dc" stroke="#fafafa" stroke-width="0.6"/>
<rect x="113" y="9.5" width="12.3" height="2" fill="#cfcfd4"/>
</svg>
<!-- pager -->
<div style="position:absolute;left:132.6px;top:667.6px;width:25px;height:19px;background:#4a8fd2"></div>
<div style="position:absolute;left:135.3px;top:668.3px;width:14.6px;height:10.4px;box-sizing:border-box;border:1px solid #10244a;background:#a6d2f2"></div>
<div style="position:absolute;left:159.2px;top:667.6px;width:25px;height:19px;background:#a9a9aa"></div>
<!-- task button -->
<div style="position:absolute;left:190.9px;top:665.9px;width:116.4px;height:22.5px;box-sizing:border-box;background:#8193b6;border:1px solid #97a7c6;border-bottom-color:#6f82a6;border-radius:1px"></div>
<svg style="position:absolute;left:191px;top:666px" width="22" height="22" viewBox="0 0 22 22">
<defs><radialGradient id="moon" cx="0.6" cy="0.4" r="0.7"><stop offset="0" stop-color="#dfe6f2"/><stop offset="0.6" stop-color="#a4b2ca"/><stop offset="1" stop-color="#56647e"/></radialGradient></defs>
<circle cx="11" cy="11" r="9.3" fill="url(#moon)"/>
<path d="M6 3.5 C2 7 2 15 6.5 19 C4 14 4 8 6 3.5Z" fill="#4a5670" opacity="0.6"/>
</svg>
<div class="t" style="left:213.2px;top:669px;font-size:11.7px;letter-spacing:0.46px;color:#111a2e">[lffl linux freedo...</div>
<!-- tray -->
<div style="position:absolute;left:731.5px;top:664.3px;width:32px;height:25.7px;background:#fff"></div>
<div style="position:absolute;left:733px;top:666px;width:29px;height:22px;background:#000"></div>
<svg style="position:absolute;left:733px;top:666px" width="29" height="22" viewBox="0 0 29 22">
<path d="M0 22 L0 17 L1 16.5 L2 17.5 L3 16 L4 17 L5 16.8 L6 17.5 L7 16.2 L8 17 L9 16.8 L10 17.3 L11 16.5 L12 17.2 L13 17 L14 17.6 L15 16.8 L16 17.4 L17 16.9 L18 17.5 L19 16.7 L20 17.2 L21 15.8 L22 17 L23 16.5 L24 17.3 L25 16.9 L26 17.1 L27 16.6 L28 17.2 L29 17 L29 22Z" fill="#3d9a2e"/>
<rect x="0" y="20" width="29" height="2" fill="#d83020"/>
</svg>
<svg style="position:absolute;left:765px;top:667.5px" width="20" height="21" viewBox="0 0 20 21">
<path d="M10 0.8 C13 2.5 16 3 18.6 3 C18.8 11 16 17 10 20.3 C4 17 1.2 11 1.4 3 C4 3 7 2.5 10 0.8Z" fill="#d9525a" opacity="0.85"/>
<path d="M6 7 L14 15 M14 7 L6 15" stroke="#f3a0a4" stroke-width="2.2"/>
</svg>
<svg style="position:absolute;left:790px;top:667px" width="19" height="21" viewBox="0 0 19 21">
<path d="M1.3 3.5 L1.3 16.5 C1.3 19.5 17.5 19.5 17.5 16.5 L17.5 3.5Z" fill="#1fc22c" stroke="#0c5a14" stroke-width="1"/>
<ellipse cx="9.4" cy="3.5" rx="8.1" ry="2.7" fill="#31d43c" stroke="#0c5a14" stroke-width="1"/>
<ellipse cx="9.4" cy="16" rx="7" ry="2.3" fill="#6bff70" opacity="0.7"/>
</svg>
<svg style="position:absolute;left:813px;top:667px" width="23" height="20" viewBox="0 0 23 20">
<circle cx="8" cy="7" r="6.5" fill="#7a92a6" opacity="0.8"/>
<path d="M3 4 L13 10 M13 4 L3 10 M8 1 L8 13" stroke="#c8d8d0" stroke-width="1"/>
<rect x="8.5" y="10" width="13.5" height="9" fill="#1a9a1e" stroke="#0e5a10" stroke-width="0.8"/>
<rect x="2" y="11.5" width="6" height="6" fill="#2a7a2a"/>
</svg>
<svg style="position:absolute;left:838px;top:666px" width="22" height="22" viewBox="0 0 22 22">
<path d="M2 8 L6 8 L11 3.5 L11 18.5 L6 14 L2 14Z" fill="#1a2c50"/>
<path d="M13.5 6.5 C15.5 9 15.5 13 13.5 15.5" fill="none" stroke="#0c1428" stroke-width="1.5"/>
<path d="M16 4 C19.5 8 19.5 14 16 18" fill="none" stroke="#0c1428" stroke-width="1.6"/>
<path d="M18.5 1.5 C23 7 23 15 18.5 20.5" fill="none" stroke="#0c1428" stroke-width="1.6"/>
</svg>
<svg style="position:absolute;left:865.5px;top:667.5px" width="16" height="19" viewBox="0 0 16 19">
<rect x="1" y="2.2" width="14" height="16" fill="#f4f4f0" stroke="#d88a4a" stroke-width="1.6"/>
<rect x="5" y="0.5" width="6" height="3" rx="1" fill="#6fd36a"/>
<path d="M5.5 16 L5.5 6 L8.8 6 C11.8 6 11.8 11 8.8 11 L5.5 11" fill="none" stroke="#111" stroke-width="1.8"/>
</svg>
<div class="t" style="left:887.6px;top:669.7px;font-size:11.8px;color:#e6ecf8;-webkit-text-stroke:0">18:27</div>

</body></html>
